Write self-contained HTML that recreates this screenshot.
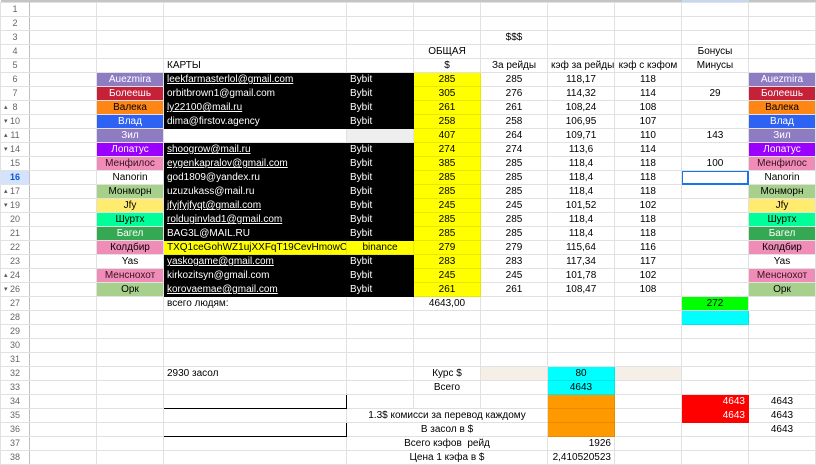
<!DOCTYPE html>
<html><head><meta charset="utf-8"><style>
html,body{margin:0;padding:0;background:#fff;width:816px;height:465px;overflow:hidden}
table{border-collapse:collapse;table-layout:fixed;width:815px;font-family:"Liberation Sans",Arial,sans-serif;font-size:10px;color:#000;position:absolute;left:0;top:0}
td{border:1px solid #e1e1e1;height:13px;padding:0 3px;white-space:nowrap;overflow:hidden;line-height:13px}
tr{height:14px}
tr.top{height:2px}
tr.top td{height:2px;padding:0;border:0;background:#c4c4c4;line-height:2px;font-size:1px}
td.h{color:#666;font-size:9px;text-align:center;border-right:1px solid #c0c0c0;position:relative;background:#fff;padding:0}
td.h span.a{position:absolute;left:3px;font-size:7px;color:#555}
td.sel{background:#d3e3fd;color:#0b57d0;font-weight:bold}
.c{text-align:center}.r{text-align:right}
.k{background:#000;color:#fff;border-color:#000}
.u{text-decoration:underline}
.y{background:#ffff00;border-color:#e8e800}
.w{color:#fff}
.or{background:#ff9900;border-color:#e68a00}
.cy{background:#00ffff;border-color:#00e6e6}
.bg{background:#f6efe8}
.rd{background:#ff0000;color:#fff;text-align:right;border-color:#ff0000}
.gr{background:#00ff00;text-align:center}
</style></head><body>
<table>
<colgroup><col style="width:29px"><col style="width:67px"><col style="width:67px"><col style="width:183px"><col style="width:67px"><col style="width:67px"><col style="width:67px"><col style="width:67px"><col style="width:67px"><col style="width:67px"><col style="width:67px"></colgroup>
<tr class="top"><td></td><td></td><td></td><td></td><td></td><td></td><td></td><td></td><td></td><td style="background:#c8d7f0"></td><td></td></tr>
<tr><td class="h">1</td><td></td><td></td><td></td><td></td><td></td><td></td><td></td><td></td><td></td><td></td></tr>
<tr><td class="h">2</td><td></td><td></td><td></td><td></td><td></td><td></td><td></td><td></td><td></td><td></td></tr>
<tr><td class="h">3</td><td></td><td></td><td></td><td></td><td></td><td class="c">$$$</td><td></td><td></td><td></td><td></td></tr>
<tr><td class="h">4</td><td></td><td></td><td></td><td></td><td class="c">ОБЩАЯ</td><td></td><td></td><td></td><td class="c">Бонусы</td><td></td></tr>
<tr><td class="h">5</td><td></td><td></td><td>КАРТЫ</td><td></td><td class="c">$</td><td class="c">За рейды</td><td class="c">кэф за рейды</td><td class="c">кэф с кэфом</td><td class="c">Минусы</td><td></td></tr>
<tr><td class="h">6</td><td></td><td class="c w" style="background:#8e7cc3">Auezmira</td><td class="k"><span class="u">leekfarmasterlol@gmail.com</span></td><td class="k">Bybit</td><td class="y c">285</td><td class="c">285</td><td class="c">118,17</td><td class="c">118</td><td></td><td class="c w" style="background:#8e7cc3">Auezmira</td></tr>
<tr><td class="h">7</td><td></td><td class="c w" style="background:#c5223a">Болеешь</td><td class="k">orbitbrown1@gmail.com</td><td class="k">Bybit</td><td class="y c">305</td><td class="c">276</td><td class="c">114,32</td><td class="c">114</td><td class="c">29</td><td class="c w" style="background:#c5223a">Болеешь</td></tr>
<tr><td class="h"><span class="a">▴</span>8</td><td></td><td class="c" style="background:#ff8514">Валека</td><td class="k"><span class="u">ly22100@mail.ru</span></td><td class="k">Bybit</td><td class="y c">261</td><td class="c">261</td><td class="c">108,24</td><td class="c">108</td><td></td><td class="c" style="background:#ff8514">Валека</td></tr>
<tr><td class="h"><span class="a">▾</span>10</td><td></td><td class="c w" style="background:#2e62f5">Влад</td><td class="k">dima@firstov.agency</td><td class="k">Bybit</td><td class="y c">258</td><td class="c">258</td><td class="c">106,95</td><td class="c">107</td><td></td><td class="c w" style="background:#2e62f5">Влад</td></tr>
<tr><td class="h"><span class="a">▴</span>11</td><td></td><td class="c w" style="background:#8e7cc3">Зил</td><td></td><td style="background:#eeeeee"></td><td class="y c">407</td><td class="c">264</td><td class="c">109,71</td><td class="c">110</td><td class="c">143</td><td class="c w" style="background:#8e7cc3">Зил</td></tr>
<tr><td class="h"><span class="a">▾</span>14</td><td></td><td class="c w" style="background:#9900ff">Лопатус</td><td class="k"><span class="u">shoogrow@mail.ru</span></td><td class="k">Bybit</td><td class="y c">274</td><td class="c">274</td><td class="c">113,6</td><td class="c">114</td><td></td><td class="c w" style="background:#9900ff">Лопатус</td></tr>
<tr><td class="h">15</td><td></td><td class="c" style="background:#f08cb8;color:#3a1020">Менфилос</td><td class="k"><span class="u">eygenkapralov@gmail.com</span></td><td class="k">Bybit</td><td class="y c">385</td><td class="c">285</td><td class="c">118,4</td><td class="c">118</td><td class="c">100</td><td class="c" style="background:#f08cb8;color:#3a1020">Менфилос</td></tr>
<tr><td class="h sel">16</td><td></td><td class="c">Nanorin</td><td class="k">god1809@yandex.ru</td><td class="k">Bybit</td><td class="y c">285</td><td class="c">285</td><td class="c">118,4</td><td class="c">118</td><td style="border:1px solid #1a73e8;box-shadow:inset 0 0 0 1px #1a73e8"></td><td class="c">Nanorin</td></tr>
<tr><td class="h"><span class="a">▴</span>17</td><td></td><td class="c" style="background:#a8d08d">Монморн</td><td class="k">uzuzukass@mail.ru</td><td class="k">Bybit</td><td class="y c">285</td><td class="c">285</td><td class="c">118,4</td><td class="c">118</td><td></td><td class="c" style="background:#a8d08d">Монморн</td></tr>
<tr><td class="h"><span class="a">▾</span>19</td><td></td><td class="c" style="background:#ffeb6e">Jfy</td><td class="k"><span class="u">jfyjfyjfyqt@gmail.com</span></td><td class="k">Bybit</td><td class="y c">245</td><td class="c">245</td><td class="c">101,52</td><td class="c">102</td><td></td><td class="c" style="background:#ffeb6e">Jfy</td></tr>
<tr><td class="h">20</td><td></td><td class="c" style="background:#00ff99">Шуртх</td><td class="k"><span class="u">rolduginvlad1@gmail.com</span></td><td class="k">Bybit</td><td class="y c">285</td><td class="c">285</td><td class="c">118,4</td><td class="c">118</td><td></td><td class="c" style="background:#00ff99">Шуртх</td></tr>
<tr><td class="h">21</td><td></td><td class="c w" style="background:#34a853">Багел</td><td class="k">BAG3L@MAIL.RU</td><td class="k">Bybit</td><td class="y c">285</td><td class="c">285</td><td class="c">118,4</td><td class="c">118</td><td></td><td class="c w" style="background:#34a853">Багел</td></tr>
<tr><td class="h">22</td><td></td><td class="c" style="background:#f08cb8">Колдбир</td><td class="y">TXQ1ceGohWZ1ujXXFqT19CevHmowCdDzV</td><td class="y c">binance</td><td class="y c">279</td><td class="c">279</td><td class="c">115,64</td><td class="c">116</td><td></td><td class="c" style="background:#f08cb8">Колдбир</td></tr>
<tr><td class="h">23</td><td></td><td class="c">Yas</td><td class="k"><span class="u">yaskogame@gmail.com</span></td><td class="k">Bybit</td><td class="y c">283</td><td class="c">283</td><td class="c">117,34</td><td class="c">117</td><td></td><td class="c">Yas</td></tr>
<tr><td class="h"><span class="a">▴</span>24</td><td></td><td class="c" style="background:#f08cb8;color:#3a1020">Менснохот</td><td class="k">kirkozitsyn@gmail.com</td><td class="k">Bybit</td><td class="y c">245</td><td class="c">245</td><td class="c">101,78</td><td class="c">102</td><td></td><td class="c" style="background:#f08cb8;color:#3a1020">Менснохот</td></tr>
<tr><td class="h"><span class="a">▾</span>26</td><td></td><td class="c" style="background:#a8d08d">Орк</td><td class="k"><span class="u">korovaemae@gmail.com</span></td><td class="k">Bybit</td><td class="y c">261</td><td class="c">261</td><td class="c">108,47</td><td class="c">108</td><td></td><td class="c" style="background:#a8d08d">Орк</td></tr>
<tr><td class="h">27</td><td></td><td></td><td>всего людям:</td><td></td><td class="c">4643,00</td><td></td><td></td><td></td><td class="gr">272</td><td></td></tr>
<tr><td class="h">28</td><td></td><td></td><td></td><td></td><td></td><td></td><td></td><td></td><td class="cy"></td><td></td></tr>
<tr><td class="h">29</td><td></td><td></td><td></td><td></td><td></td><td></td><td></td><td></td><td></td><td></td></tr>
<tr><td class="h">30</td><td></td><td></td><td></td><td></td><td></td><td></td><td></td><td></td><td></td><td></td></tr>
<tr><td class="h">31</td><td></td><td></td><td></td><td></td><td></td><td></td><td></td><td></td><td></td><td></td></tr>
<tr><td class="h">32</td><td></td><td></td><td>2930 засол</td><td></td><td class="c">Курс $</td><td class="bg"></td><td class="cy c">80</td><td class="bg"></td><td></td><td></td></tr>
<tr><td class="h">33</td><td></td><td></td><td></td><td></td><td class="c">Всего</td><td></td><td class="cy c">4643</td><td></td><td></td><td></td></tr>
<tr><td class="h">34</td><td></td><td></td><td style="border-bottom:1px solid #000;border-right:1px solid #000"></td><td></td><td></td><td></td><td class="or"></td><td></td><td class="rd">4643</td><td class="c">4643</td></tr>
<tr><td class="h">35</td><td></td><td></td><td style="border-top:1px solid #000"></td><td colspan="3" class="c" style="overflow:visible">1.3$ комисси за перевод каждому</td><td class="or"></td><td></td><td class="rd">4643</td><td class="c">4643</td></tr>
<tr><td class="h">36</td><td></td><td></td><td style="border:1px solid #000"></td><td colspan="3" class="c">В засол в $</td><td class="or"></td><td></td><td></td><td class="c">4643</td></tr>
<tr><td class="h">37</td><td></td><td></td><td style="border-top:1px solid #000"></td><td colspan="3" class="c">Всего кэфов&nbsp; рейд</td><td class="r">1926</td><td></td><td></td><td></td></tr>
<tr><td class="h">38</td><td></td><td></td><td></td><td colspan="3" class="c">Цена 1 кэфа в $</td><td class="r">2,410520523</td><td></td><td></td><td></td></tr>
</table>
</body></html>
